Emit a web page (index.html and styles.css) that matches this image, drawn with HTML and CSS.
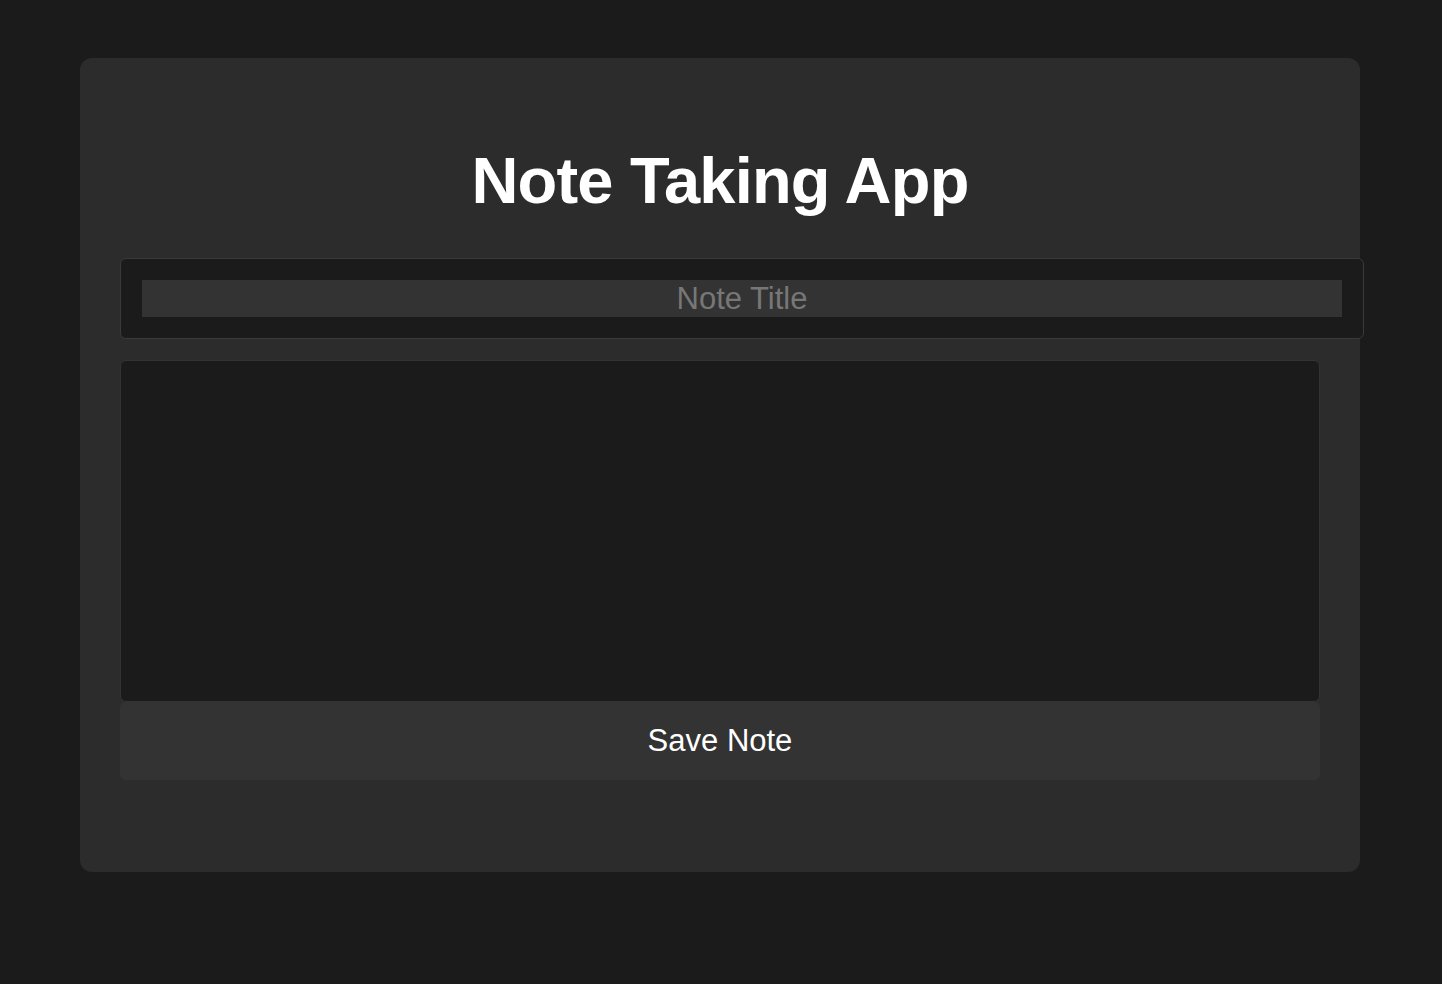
FILE: index.html
```html
<!DOCTYPE html>
<html lang="en">
<head>
<meta charset="utf-8">
<title>Note Taking App</title>
<link rel="stylesheet" href="styles.css">
</head>
<body>
<main class="card">
  <h1 class="title">Note Taking App</h1>
  <div class="title-box">
    <input class="title-input" type="text" placeholder="Note Title">
  </div>
  <textarea class="note-body"></textarea>
  <button class="save-btn" type="button">Save Note</button>
</main>
</body>
</html>
```

FILE: styles.css
```css
html, body {
  margin: 0;
  padding: 0;
  background: #1b1b1b;
  font-family: "Liberation Sans", Arial, Helvetica, sans-serif;
  color: #fff;
}

.card {
  width: 1280px;
  box-sizing: border-box;
  margin: 58px 0 0 80px;
  padding: 40px 40px 92px;
  background: #2c2c2c;
  border-radius: 12px;
  display: flex;
  flex-direction: column;
  align-items: flex-start;
}

.title {
  align-self: stretch;
  margin: 45px 0 40px;
  font-size: 65px;
  line-height: 75px;
  font-weight: 700;
  letter-spacing: -0.8px;
  text-align: center;
  color: #fff;
}

.title-box {
  width: 1200px;
  padding: 21px;
  background: #1b1b1b;
  border: 1px solid #3a3a3a;
  border-radius: 6px;
  margin-bottom: 21px;
  display: flex;
}

.title-input {
  width: 1200px;
  height: 37px;
  box-sizing: border-box;
  margin: 0;
  padding: 0 2px;
  border: 0;
  outline: none;
  background: #333333;
  color: #fff;
  font-family: "Liberation Sans", Arial, Helvetica, sans-serif;
  font-size: 31px;
  text-align: center;
}

.title-input::placeholder {
  color: #777777;
}

.note-body {
  display: block;
  width: 1200px;
  height: 342px;
  box-sizing: border-box;
  margin: 0;
  padding: 10px;
  background: #1b1b1b;
  border: 1px solid #333333;
  border-radius: 6px;
  color: #fff;
  resize: none;
  outline: none;
  font-family: "Liberation Sans", Arial, sans-serif;
}

.save-btn {
  width: 1200px;
  height: 78px;
  margin: 0;
  padding: 0;
  border: 0;
  border-radius: 6px;
  background: #333333;
  color: #fff;
  font-family: "Liberation Sans", Arial, Helvetica, sans-serif;
  font-size: 31px;
  cursor: pointer;
}
```
